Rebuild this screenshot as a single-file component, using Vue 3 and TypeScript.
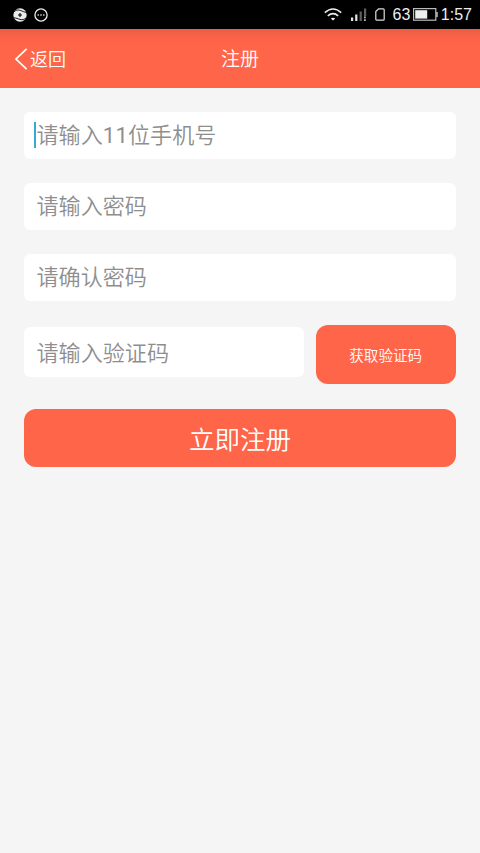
<script setup lang="ts">
interface HintPart {
  text: string
  digits?: boolean
}

interface Field {
  id: string
  hint: HintPart[]
  focused: boolean
}

const fields: Field[] = [
  {
    id: 'phone',
    hint: [{ text: '请输入' }, { text: '11', digits: true }, { text: '位手机号' }],
    focused: true,
  },
  { id: 'password', hint: [{ text: '请输入密码' }], focused: false },
  { id: 'confirm', hint: [{ text: '请确认密码' }], focused: false },
]
</script>

<template>
  <div class="screen">
    <div class="status">
      <div class="status-left">
        <svg class="app-icon" width="14" height="14" viewBox="0 0 14 14">
          <circle cx="7" cy="7" r="6.7" fill="#ececec" />
          <path d="M0.4 4.4C2.6 1.8 5 1.6 7.4 2.4S11 4.2 13.6 4.4M0.4 9.8C3 9.8 5 10.8 7 11.4S11.4 11.8 13.6 9.4" fill="none" stroke="#000" stroke-width="0.9" />
          <path d="M7 5v4M5 7h4" stroke="#000" stroke-width="1.1" />
        </svg>
        <svg width="14" height="14" viewBox="0 0 14 14">
          <circle cx="7" cy="7" r="6.1" fill="none" stroke="#ececec" stroke-width="1.3" />
          <circle cx="4.2" cy="7" r="0.8" fill="#fff" />
          <circle cx="7" cy="7" r="0.8" fill="#fff" />
          <circle cx="9.8" cy="7" r="0.8" fill="#fff" />
        </svg>
      </div>
      <div class="status-right">
        <svg class="wifi" width="18" height="13" viewBox="0 0 18 13">
          <g fill="none" stroke="#eee" stroke-width="1.6">
            <path d="M0.8 4.6Q9-2.6 17.2 4.6" />
            <path d="M3.8 7.8Q9 3.4 14.2 7.8" />
          </g>
          <path d="M6.8 10.6Q9 8.8 11.2 10.6L9 12.6Z" fill="#eee" />
        </svg>
        <svg class="signal" width="16" height="13" viewBox="0 0 16 13">
          <path d="M0 9.5h2.2V13H0zM4.2 6.5h2.2V13H4.2z" fill="#e6e6e6" />
          <path d="M8.6 3.5h2.2V13H8.6zM13 0.5h2.2V8H13z" fill="#606060" />
          <path d="M13 8.5h1.8v1.8H13zM13 11.2h1.8v1.8H13z" fill="#bbb" />
        </svg>
        <svg class="sim" width="10" height="13" viewBox="0 0 10 13">
          <path d="M3.6 0.8H8.2Q9.2 0.8 9.2 1.8V11.2Q9.2 12.2 8.2 12.2H1.8Q0.8 12.2 0.8 11.2V3.6Z" fill="none" stroke="#ddd" stroke-width="1.2" />
        </svg>
        <span class="level">63</span>
        <svg class="battery" width="25" height="13" viewBox="0 0 25 13">
          <rect x="0.6" y="0.6" width="22.2" height="11.6" fill="none" stroke="#bbb" stroke-width="1.2" />
          <rect x="2.2" y="2.2" width="12" height="8.4" fill="#eee" />
          <path d="M24 4v5" stroke="#ddd" stroke-width="1.3" />
        </svg>
        <span class="time">1:57</span>
      </div>
    </div>

    <header class="header">
      <div class="back">
        <svg width="13" height="22" viewBox="0 0 13 22">
          <path d="M11.6 0.8L1 11L11.6 21.2" fill="none" stroke="#fff" stroke-width="1.7" />
        </svg>
        <span class="back-label">返回</span>
      </div>
      <h1 class="title">注册</h1>
    </header>

    <main class="form">
      <div v-for="field in fields" :key="field.id" class="field">
        <span v-if="field.focused" class="caret"></span>
        <span class="hint"><span v-for="part in field.hint" :key="part.text" :class="{ digits: part.digits }">{{ part.text }}</span></span>
      </div>
      <div class="code-row">
        <div class="field code-field"><span class="hint">请输入验证码</span></div>
        <button class="btn code-btn" type="button">获取验证码</button>
      </div>
      <button class="btn submit" type="button">立即注册</button>
    </main>
  </div>
</template>

<style>
body {
  background: #f5f5f5;
}
</style>

<style scoped>
.screen {
  min-height: 853px;
  background: #f5f5f5;
  font-family: Roboto, "Noto Sans CJK SC", sans-serif;
  font-weight: 350;
}

.status {
  display: flex;
  justify-content: space-between;
  box-sizing: border-box;
  height: 29px;
  padding: 0 8px 0 13px;
  background: #000;
}

.status-left,
.status-right {
  display: flex;
  align-items: center;
  height: 29px;
}

.status-left {
  gap: 7px;
}

.signal {
  margin-left: 9px;
}

.sim {
  margin-left: 7.5px;
}

.level,
.time {
  color: #eee;
  font-family: "Liberation Sans", sans-serif;
  font-size: 16px;
  font-weight: 400;
  line-height: 30px;
}

.level {
  margin-left: 8px;
}

.battery {
  margin: 0 3px 0 2.5px;
}

.header {
  display: grid;
  grid-template-columns: 1fr auto 1fr;
  align-items: center;
  height: 59px;
  background: linear-gradient(#eb5e44, #fc6347 10px, #ff6548 16px);
  color: #fff;
}

.back {
  display: flex;
  align-items: center;
  gap: 2px;
  padding-left: 15px;
  font-size: 18px;
}

.back-label {
  padding-bottom: 1px;
}

.title {
  margin: 0;
  padding-bottom: 2px;
  font-size: 19px;
  font-weight: inherit;
}

.form {
  display: flex;
  flex-direction: column;
  padding: 24.3px 24.3px 0;
}

.field {
  display: flex;
  align-items: center;
  position: relative;
  box-sizing: border-box;
  height: 46.8px;
  margin-bottom: 24.2px;
  padding-left: 12.2px;
  border-radius: 6px;
  background: #fff;
}

.hint {
  padding-bottom: 2px;
  color: #8e8e8e;
  font-size: 22.1px;
  line-height: 44px;
}

.digits {
  font-weight: 400;
  letter-spacing: 0.2px;
}

.caret {
  position: absolute;
  top: 9.7px;
  left: 9.7px;
  width: 2px;
  height: 26.5px;
  background: #33abd4;
}

.code-row {
  display: flex;
  align-items: flex-start;
  gap: 12px;
  height: 59px;
  margin-bottom: 24.3px;
}

.code-field {
  flex: 1;
  height: 50px;
  margin: 2px 0 0;
  padding-top: 3px;
}

.btn {
  padding: 0;
  border: 0;
  border-radius: 12px;
  background: #ff6548;
  color: #fff;
  font-family: inherit;
  font-weight: inherit;
}

.code-btn {
  width: 140px;
  height: 59px;
  font-size: 14.6px;
}

.submit {
  height: 58.8px;
  font-size: 25.5px;
}
</style>
